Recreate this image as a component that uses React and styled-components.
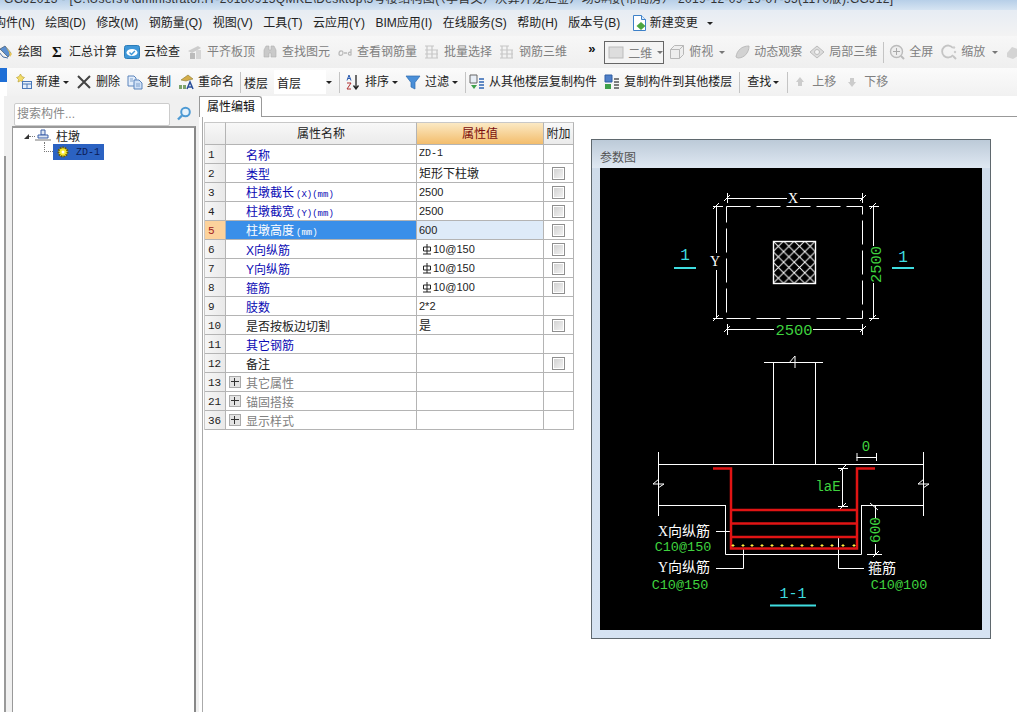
import React from "react";
import styled, { createGlobalStyle } from "styled-components";

const Global = createGlobalStyle`
  html, body { margin: 0; padding: 0; background: #fff; }
  body { font-family: "Liberation Sans", "Noto Sans CJK SC", sans-serif; font-size: 12px; color: #222; }
`;

const Page = styled.div`
  width: 1017px;
  height: 712px;
  overflow: hidden;
  display: flex;
  flex-direction: column;
`;

const TitleBar = styled.div`
  height: 10px;
  flex: none;
  overflow: hidden;
  padding-left: 4px;
  white-space: nowrap;
  background: linear-gradient(#b7cfe8, #d6e4f2);
  span {
    display: block;
    margin-top: -8px;
    line-height: 14px;
    font-size: 12px;
    letter-spacing: 0.35px;
    color: #333;
  }
`;

const MenuBar = styled.div`
  height: 26px;
  flex: none;
  display: flex;
  align-items: center;
  gap: 10.5px;
  margin-left: -6px;
  padding-left: 0;
  background: linear-gradient(#e6ecf3, #f3f3f3);
  white-space: nowrap;
`;

const MenuItem = styled.span`
  display: flex;
  align-items: center;
  gap: 3px;
  line-height: 16px;
`;

const ToolBar = styled.div`
  height: ${(p) => p.$h}px;
  flex: none;
  display: flex;
  align-items: center;
  white-space: nowrap;
  background: ${(p) => p.$bg};
`;

const Tool = styled.span`
  display: flex;
  align-items: center;
  flex: none;
  gap: ${(p) => p.$gap ?? 4}px;
  margin-right: ${(p) => p.$mr ?? 7}px;
  margin-left: ${(p) => p.$ml ?? 0}px;
  color: ${(p) => (p.$off ? "#808080" : "#222")};
  line-height: 16px;
`;

const Sep = styled.i`
  display: block;
  flex: none;
  width: 1px;
  height: 21px;
  background: #c4c4c4;
  margin-right: ${(p) => p.$mr ?? 5}px;
`;

const Caret = styled.i`
  display: block;
  flex: none;
  width: 0;
  height: 0;
  border-left: 3px solid transparent;
  border-right: 3px solid transparent;
  border-top: 3px solid ${(p) => (p.$off ? "#777" : "#222")};
  margin-left: ${(p) => p.$ml ?? -1}px;
`;

const ViewButton = styled.span`
  display: flex;
  align-items: center;
  gap: 4px;
  box-sizing: border-box;
  width: 61px;
  height: 23px;
  margin-right: 5px;
  padding-left: 3px;
  border: 1px solid #666;
  color: #808080;
  background: #f4f4f4;
`;

const LeftStub = styled.div`
  width: 13px;
  height: 100%;
  flex: none;
  margin-right: 3px;
  background: linear-gradient(#1f6fd6 0 14px, #fff 14px);
  clip-path: polygon(0 0, 7px 0, 7px 100%, 0 100%);
`;

const FloorLabel = styled.span`
  margin-right: 6px;
`;

const FloorSelect = styled.span`
  display: flex;
  align-items: center;
  justify-content: space-between;
  box-sizing: border-box;
  width: 65px;
  height: 24px;
  padding: 0 7px 0 3px;
  background: linear-gradient(90deg, #fff 80%, transparent 80%);
`;

const Body = styled.div`
  flex: 1;
  min-height: 0;
  display: flex;
`;

const Sidebar = styled.aside`
  box-sizing: border-box;
  width: 195px;
  margin-left: 4px;
  flex: none;
  display: flex;
  flex-direction: column;
  border-left: 2px solid #999;
  border-image: linear-gradient(transparent 61px, #999 61px) 1;
  padding: 0 3px 0 6px;
  background: #f0f0f0;
`;

const SearchRow = styled.div`
  height: 30px;
  flex: none;
  display: flex;
  align-items: center;
  gap: 6px;
  padding: 6px 0 0 2px;
  box-sizing: border-box;
`;

const SearchBox = styled.div`
  box-sizing: border-box;
  width: 156px;
  height: 23px;
  padding-left: 2px;
  line-height: 20px;
  color: #888;
  background: #fff;
  border: 1px solid #ccc;
  border-radius: 2px;
`;

const Tree = styled.div`
  flex: 1;
  background: #fff;
  border-top: 2px solid #999;
  border-left: 1px solid #999;
  border-right: 2px solid #888;
`;

const TreeRow = styled.div`
  display: flex;
  align-items: center;
  height: 16px;
  padding-left: ${(p) => p.$indent}px;
`;

const Expander = styled.i`
  display: block;
  width: 0;
  height: 0;
  border-left: 5px solid transparent;
  border-bottom: 5px solid #333;
`;

const Dots = styled.i`
  display: block;
  width: 6px;
  border-top: 1px dotted #777;
`;

const Elbow = styled.i`
  display: block;
  align-self: flex-start;
  box-sizing: border-box;
  width: 9px;
  height: 10px;
  margin-top: -2px;
  border-left: 1px dotted #777;
  border-bottom: 1px dotted #777;
`;

const NodeLabel = styled.span`
  margin: 2px 0 0 5px;
  line-height: 16px;
`;

const SelectedNode = styled.span`
  display: flex;
  align-items: center;
  gap: 7px;
  width: 51px;
  height: 16px;
  padding-left: 4px;
  box-sizing: border-box;
  background: #2b62c2;
  font-family: "Liberation Mono", monospace;
  font-size: 10px;
  color: #0c1c55;
`;

const Main = styled.main`
  flex: 1;
  min-width: 0;
  display: flex;
  flex-direction: column;
`;

const TabStrip = styled.div`
  height: 21px;
  flex: none;
  box-sizing: border-box;
  border-bottom: 1px solid #999;
`;

const Tab = styled.div`
  box-sizing: border-box;
  width: 63px;
  height: 21px;
  padding-left: 7px;
  line-height: 21px;
  color: #111;
  background: #fff;
  border: 1px solid #999;
  border-bottom: 0;
  border-top-right-radius: 3px;
`;

const Sheet = styled.div`
  flex: 1;
  display: flex;
  align-items: flex-start;
  margin-left: 3px;
  padding: 5px 0 0 1px;
  border-left: 1px solid #aaa;
`;

const Grid = styled.div`
  width: 370px;
  flex: none;
  border-left: 1px solid #c8c8c8;
  box-sizing: border-box;
`;

const Row = styled.div`
  display: grid;
  grid-template-columns: 21px 191px 127px 30px;
  grid-template-rows: ${(p) => p.$h ?? 19}px;
`;

const Cell = styled.div`
  box-sizing: border-box;
  display: flex;
  align-items: center;
  min-width: 0;
  white-space: nowrap;
  line-height: 14px;
  border-right: 1px solid #b4b4b4;
  border-bottom: 1px solid #b4b4b4;
`;

const HeadCell = styled(Cell)`
  justify-content: center;
  color: ${(p) => (p.$hot ? "#7a0c0c" : "#222")};
  background: ${(p) =>
    p.$hot ? "linear-gradient(#fbe9c4, #f3bd6c)" : "linear-gradient(#f8f8f8, #ebebeb)"};
  border-top: 1px solid #c8c8c8;
`;

const NumCell = styled(Cell)`
  padding: 1px 0 0 3px;
  font-family: "Liberation Mono", monospace;
  font-size: 11px;
  color: ${(p) => (p.$hot ? "#a02020" : "#222")};
  background: ${(p) => (p.$hot ? "#fcd29c" : "linear-gradient(90deg, #f6f6f6, #e9e9e9)")};
`;

const NameCell = styled(Cell)`
  padding-left: ${(p) => (p.$plus ? 3 : 20)}px;
  gap: 5px;
  color: ${(p) =>
    p.$hot ? "#fff" : p.$kind === "link" ? "#0a0ab4" : p.$kind === "group" ? "#808080" : "#222"};
  background: ${(p) => (p.$hot ? "#3a8fe9" : "#fff")};
  span {
    margin-top: 3px;
  }
  small {
    margin-left: 2px;
    font-family: "Liberation Mono", monospace;
    font-size: 9px;
  }
`;

const ValueCell = styled(Cell)`
  padding-left: 2px;
  font-size: 11px;
  background: ${(p) => (p.$hot ? "#deebf9" : "#fff")};
`;

const AddCell = styled(Cell)`
  justify-content: center;
`;

const CheckBox = styled.i`
  display: block;
  box-sizing: border-box;
  width: 13px;
  height: 13px;
  border: 1px solid #8f8f8f;
  background: linear-gradient(135deg, #cfcfcf, #f4f4f4);
  box-shadow: inset 0 0 0 1px #fff;
`;

const PlusBox = styled.i`
  position: relative;
  display: block;
  box-sizing: border-box;
  width: 12px;
  height: 12px;
  border: 1px solid #aaa;
  background: #e4e4e4;
  &::before, &::after {
    content: "";
    position: absolute;
    background: #333;
  }
  &::before { left: 1px; right: 1px; top: 4px; height: 1px; }
  &::after { top: 1px; bottom: 1px; left: 4px; width: 1px; }
`;

const Steel = styled.span`
  display: flex;
  align-items: center;
  gap: 1px;
  padding-left: 3px;
`;

const ParamPanel = styled.section`
  box-sizing: border-box;
  width: 400px;
  height: 500px;
  flex: none;
  margin: 17px 0 0 17px;
  padding: 0 8px 8px;
  border: 1px solid #5f686e;
  background: linear-gradient(#bccad8 0, #dfe8f2 28px, #cfdcea 28px, #d6e3f2 100%);
`;

const ParamTitle = styled.div`
  height: 28px;
  line-height: 36px;
  color: #555;
`;

const Drawing = styled.svg`
  display: block;
  width: 382px;
  height: 462px;
  background: #000;
`;

const CadText = styled.text`
  font-family: ${(p) =>
    p.$serif ? '"Liberation Serif", "Noto Sans CJK SC", serif' : '"Liberation Mono", monospace'};
  font-size: ${(p) => p.$size ?? 14}px;
  fill: ${(p) => p.$color ?? "#fff"};
  stroke: none;
  text-anchor: middle;
  dominant-baseline: central;
`;

const Ico = ({ w = 16, children }) => (
  <svg width={w} height="16" viewBox={`0 0 ${w} 16`} style={{ flex: "none", display: "block" }}>
    {children}
  </svg>
);

const icons = {
  draw: (
    <>
      <path d="M2 5l5-3 6 7-3 4z" fill="#5b8fd0" stroke="#345" strokeWidth=".6" />
      <path d="M8 3l6 7-2 3-1-5z" fill="#e8c65a" />
      <path d="M1 8l4 5 5 1" fill="none" stroke="#4a6fa5" />
    </>
  ),
  cloud: (
    <>
      <rect x=".5" y="1.5" width="15" height="13" rx="2" fill="#3e97d8" stroke="#2b7cb8" />
      <ellipse cx="8" cy="8.5" rx="5.5" ry="3.6" fill="#fff" />
      <path d="M5.5 8.5l2 2 3.4-3.6" fill="none" stroke="#3e97d8" strokeWidth="1.4" />
    </>
  ),
  align: (
    <>
      <path d="M1 7l10-5 3 2-9 5z" fill="#ccc" />
      <rect x="3" y="9" width="5" height="6" fill="#bbb" />
      <rect x="9" y="6" width="5" height="9" fill="#d6d6d6" />
    </>
  ),
  binoc: (
    <path d="M2 6l2-4h3v4h2V2h3l2 4v7H9V9H7v4H2z" fill="#c9c9c9" stroke="#b0b0b0" strokeWidth=".6" />
  ),
  squiggle: (
    <path d="M2 10c0-4 4-4 4-1s-4 3-4 1zM7 9h3M14 5v6c-3 1-4-3 0-3" fill="none" stroke="#bbb" strokeWidth="1.3" />
  ),
  batch: (
    <path d="M1 2h9M1 6h13M1 10h13M1 14h13M3 2v12M8 2v12M13 6v8" fill="none" stroke="#c6c6c6" strokeWidth="1.2" />
  ),
  flat: <rect x="1" y="3" width="14" height="11" fill="#ddd" stroke="#bbb" />,
  cube: (
    <path d="M1.5 5.5l4-4h9v9l-4 4h-9zM1.5 5.5h9v9M10.5 5.5l4-4" fill="#eee" stroke="#b8b8b8" />
  ),
  orbit: <path d="M2 13C3 6 8 2 15 2c0 7-5 12-11 12z" fill="#d2d2d2" stroke="#bbb" />,
  local: (
    <>
      <path d="M8 2l7 6-7 6-7-6z" fill="#ddd" stroke="#bbb" />
      <circle cx="8" cy="8" r="2.5" fill="#f4f4f4" stroke="#bbb" />
    </>
  ),
  full: (
    <>
      <circle cx="7.5" cy="7.5" r="6" fill="#eee" stroke="#bbb" strokeWidth="1.4" />
      <path d="M7.5 4v7M4 7.5h7" stroke="#aaa" />
      <path d="M12 12l3 3" stroke="#bbb" strokeWidth="2" />
    </>
  ),
  zoom: (
    <>
      <path d="M12 4a6 6 0 1 0 0 7" fill="none" stroke="#c4c4c4" strokeWidth="1.8" />
      <path d="M12 12l3 3" stroke="#c4c4c4" strokeWidth="2" />
      <circle cx="13" cy="3.5" r="1.2" fill="#ccc" />
      <circle cx="14" cy="8" r="1.2" fill="#ccc" />
    </>
  ),
  blob: <path d="M2 9l5-6 6 2v7l-5 3-6-2z" fill="#d4d4d4" />,
  create: (
    <>
      <path d="M4.5 0l1.4 2.6L8.500 3.500 6.500 5.500 7 8 4.500 6.800 2 8l.5-2.500L.5 3.500 3 2.600z" fill="#f2dc6a" stroke="#b69a2a" strokeWidth=".6" />
      <rect x="6.500" y="7.500" width="9" height="7" fill="#e4eefb" stroke="#4a78b8" />
      <path d="M6.500 10h9M11 10v4.500" stroke="#4a78b8" />
    </>
  ),
  remove: <path d="M2 2l12 12M14 2L2 14" stroke="#444" strokeWidth="2" />,
  copy: (
    <>
      <path d="M1 2h6l2 2v8H1z" fill="#e4eefb" stroke="#5a84bc" />
      <path d="M7 6h5l3 3v6H7z" fill="#cfe0f6" stroke="#5a84bc" />
      <path d="M3 5h3M3 7h3M9 10h4M9 12h4" stroke="#5a84bc" strokeWidth=".7" />
    </>
  ),
  rename: (
    <>
      <path d="M3 6l7-5 5 4-4 1-3 1z" fill="#d4ad4a" stroke="#8a7a30" strokeWidth=".6" />
      <path d="M1 15v-4h3v4zM5 15v-4h3v4z" fill="#7ca26a" />
      <path d="M9 15l3-7 3 7M10 13h4" fill="none" stroke="#2a4f9a" strokeWidth="1.5" />
    </>
  ),
  sort: (
    <>
      <path d="M2 6.500L4 1l2 5.500M2.800 4.500h2.400" fill="none" stroke="#2a5bb0" />
      <path d="M2 9h4l-4 6h4" fill="none" stroke="#b03030" />
      <path d="M11 1v13M8.500 11.500L11 15l2.500-3.500" fill="none" stroke="#222" strokeWidth="1.3" />
    </>
  ),
  filter: <path d="M1 2h14L10 8.500V15l-4-2V8.500z" fill="#4a8fd8" stroke="#2e6cb0" strokeWidth=".7" />,
  fromFloor: (
    <>
      <path d="M1 1h7v8H1z" fill="#e8eef6" stroke="#666" />
      <path d="M2 11h6l-3 4z" fill="#3ea04a" />
      <path d="M10 5h5M10 8h5M10 11h5M10 14h5" stroke="#2f66b4" strokeWidth="1.600" />
    </>
  ),
  toFloor: (
    <>
      <path d="M1 1h7v7H1z" fill="#4f7fc8" stroke="#2f5ea4" />
      <path d="M1 10h6v5H1z" fill="#3ea04a" />
      <path d="M10 5h5M10 8h5M10 11h5M10 14h5" stroke="#555" strokeWidth="1.600" />
    </>
  ),
  up: <path d="M8 3l4 5h-2v4H6V8H4z" fill="#ccc" />,
  down: <path d="M8 13l4-5h-2V4H6v4H4z" fill="#ccc" />,
  change: (
    <>
      <path d="M2.500 .500h8l4 4v11h-12z" fill="#fff" stroke="#3d80c8" />
      <path d="M10.500 .500v4h4" fill="#dceafa" stroke="#3d80c8" />
      <path d="M10 7l4.500 4L10 15l-4.500-4z" fill="#4ea63e" />
    </>
  ),
  search: (
    <>
      <circle cx="9.500" cy="6" r="4.300" fill="#e6f2fb" stroke="#4d9ad4" strokeWidth="2" />
      <path d="M6 9.500l-4 4" stroke="#4d9ad4" strokeWidth="2.400" />
    </>
  ),
  pier: (
    <>
      <path d="M6 2h4v5H6z" fill="#dde6f3" stroke="#3a5fa8" />
      <path d="M3 7h10v3H3z" fill="#dde6f3" stroke="#3a5fa8" />
      <path d="M0 11h16v2H0z" fill="#bbb" />
    </>
  ),
  gear: (
    <>
      <circle cx="6" cy="8" r="4.500" fill="#f6ea2e" stroke="#6a5a00" strokeDasharray="1.500 1" strokeWidth="2" />
      <circle cx="6" cy="8" r="1.500" fill="#fff" />
    </>
  ),
};

const Icon = ({ name, w }) => <Ico w={w}>{icons[name]}</Ico>;

const SigmaGlyph = styled.b`
  display: block;
  width: 10px;
  font-family: "Liberation Serif", serif;
  font-size: 15px;
  color: #111;
`;

const Chevrons = styled.b`
  display: block;
  width: 8px;
  margin-top: -7px;
  font-size: 13px;
  color: #111;
`;

const MainTools = () => (
  <ToolBar $h={32} $bg="linear-gradient(#f7f7f7, #efefef)">
    <Tool $ml={-2} $mr={10}><Icon name="draw" />绘图</Tool>
    <Tool $mr={7} $gap={7}>
      <SigmaGlyph>Σ</SigmaGlyph>汇总计算
    </Tool>
    <Tool><Icon name="cloud" />云检查</Tool>
    <Tool $off $mr={7}><Icon name="align" />平齐板顶</Tool>
    <Tool $off><Icon name="binoc" />查找图元</Tool>
    <Tool $off><Icon name="squiggle" />查看钢筋量</Tool>
    <Tool $off><Icon name="batch" />批量选择</Tool>
    <Tool $off $mr={21}><Icon name="batch" />钢筋三维</Tool>
    <Tool $mr={8}><Chevrons>»</Chevrons></Tool>
    <ViewButton><Icon name="flat" />二维<Caret $off $ml={1} /></ViewButton>
    <Tool $off $mr={9}><Icon name="cube" />俯视<Caret $off $ml={2} /></Tool>
    <Tool $off><Icon name="orbit" />动态观察</Tool>
    <Tool $off $mr={6}><Icon name="local" />局部三维</Tool>
    <Sep />
    <Tool $off $mr={8}><Icon name="full" />全屏</Tool>
    <Tool $off><Icon name="zoom" />缩放<Caret $off $ml={3} /></Tool>
    <Tool $off><Icon name="blob" /></Tool>
  </ToolBar>
);

const ElementTools = () => (
  <ToolBar $h={28} $bg="linear-gradient(#fbfbfb, #f1f1f1)">
    <LeftStub />
    <Tool $mr={8}><Icon name="create" />新建<Caret /></Tool>
    <Tool $ml={-1} $mr={7}><Icon name="remove" />删除</Tool>
    <Tool><Icon name="copy" />复制</Tool>
    <Tool $mr={6}><Icon name="rename" />重命名</Tool>
    <Sep $mr={3} />
    <FloorLabel>楼层</FloorLabel>
    <FloorSelect>首层<Caret $ml={0} /></FloorSelect>
    <Sep />
    <Tool><Icon name="sort" />排序<Caret /></Tool>
    <Tool><Icon name="filter" />过滤<Caret /></Tool>
    <Sep $mr={3} />
    <Tool><Icon name="fromFloor" />从其他楼层复制构件</Tool>
    <Tool><Icon name="toFloor" />复制构件到其他楼层</Tool>
    <Sep $mr={7} />
    <Tool $mr={8} $gap={3}>查找<Caret /></Tool>
    <Sep $mr={4} />
    <Tool $off $mr={8}><Icon name="up" />上移</Tool>
    <Tool $off><Icon name="down" />下移</Tool>
  </ToolBar>
);

const rows = [
  { n: 1, name: "名称", kind: "link", value: "ZD-1", mono: true },
  { n: 2, name: "类型", kind: "link", value: "矩形下柱墩", check: true, big: true },
  { n: 3, name: "柱墩截长", unit: "(X)(mm)", kind: "link", value: "2500", check: true },
  { n: 4, name: "柱墩截宽", unit: "(Y)(mm)", kind: "link", value: "2500", check: true },
  { n: 5, name: "柱墩高度", unit: "(mm)", kind: "link", value: "600", check: true, hot: true },
  { n: 6, name: "X向纵筋", kind: "link", steel: "10@150", check: true },
  { n: 7, name: "Y向纵筋", kind: "link", steel: "10@150", check: true },
  { n: 8, name: "箍筋", kind: "link", steel: "10@100", check: true },
  { n: 9, name: "肢数", kind: "link", value: "2*2" },
  { n: 10, name: "是否按板边切割", value: "是", check: true, big: true },
  { n: 11, name: "其它钢筋", kind: "link" },
  { n: 12, name: "备注", check: true },
  { n: 13, name: "其它属性", kind: "group", plus: true },
  { n: 21, name: "锚固搭接", kind: "group", plus: true },
  { n: 36, name: "显示样式", kind: "group", plus: true },
];

const BigValue = styled.span`
  margin-top: 2px;
  font-size: 12px;
`;

const MonoValue = styled.span`
  font-family: "Liberation Mono", monospace;
  font-size: 10px;
`;

const SteelMark = () => (
  <svg width="10" height="11" viewBox="0 0 10 11" style={{ display: "block" }}>
    <path d="M1.500 3h7v4h-7zM5 0v10M1 10h8" fill="none" stroke="#222" />
  </svg>
);

const PropertyGrid = () => (
  <Grid>
    <Row $h={23}>
      <HeadCell />
      <HeadCell>属性名称</HeadCell>
      <HeadCell $hot>属性值</HeadCell>
      <HeadCell>附加</HeadCell>
    </Row>
    {rows.map((r) => (
      <Row key={r.n}>
        <NumCell $hot={r.hot}>{r.n}</NumCell>
        <NameCell $kind={r.kind} $hot={r.hot} $plus={r.plus}>
          {r.plus && <PlusBox />}
          <span>
            {r.name}
            {r.unit && <small>{r.unit}</small>}
          </span>
        </NameCell>
        <ValueCell $hot={r.hot}>
          {r.steel ? (
            <Steel><SteelMark />{r.steel}</Steel>
          ) : r.big ? (
            <BigValue>{r.value}</BigValue>
          ) : r.mono ? (
            <MonoValue>{r.value}</MonoValue>
          ) : (
            r.value
          )}
        </ValueCell>
        <AddCell>{r.check && <CheckBox />}</AddCell>
      </Row>
    ))}
  </Grid>
);

const GREEN = "#3fd23f";
const CYAN = "#3fdde0";
const RED = "#e01414";

// short slash on the end of a dimension line
const Tick = ({ x, y }) => <path d={`M${x - 3} ${y + 3}L${x + 3} ${y - 3}`} />;

const BreakH = ({ x, y }) => <path d={`M${x - 4} ${y + 1}L${x + 2} ${y - 6}V${y + 6}`} fill="none" />;
const BreakV = ({ x, y }) => <path d={`M${x + 1} ${y - 5}L${x - 5} ${y}H${x + 6}L${x} ${y + 4}`} fill="none" />;

const dots = [733, 743, 752, 762, 772, 782, 792, 802, 812, 822, 832, 843, 854];

const ParamDrawing = () => (
  <Drawing viewBox="600 168 382 462">
    <defs>
      <pattern id="hatch" width="10.6" height="10.6" patternUnits="userSpaceOnUse" x="773" y="241">
        <path d="M0 0L10.600 10.600M10.600 0L0 10.600" stroke="#fff" strokeWidth="1" />
      </pattern>
    </defs>

    {/* plan */}
    <g stroke="#fff" strokeWidth="1" fill="none">
      <rect x="726.5" y="206.5" width="136" height="112" strokeDasharray="24 6" />
      <rect x="773.5" y="241.500" width="42" height="42" fill="url(#hatch)" strokeWidth="1.400" />
      <path d="M727.500 198.500H787M800 198.500H863M727.500 193V203M862.500 193V203" />
      <Tick x={727} y={198} />
      <Tick x={863} y={198} />
      <path d="M716.500 206V253M716.500 270V318M713 206.500H723M713 318.500H723" />
      <Tick x={716} y={206} />
      <Tick x={716} y={318} />
      <path d="M873.500 206V246M873.500 283V318M869 206.500H879M869 318.500H879" />
      <Tick x={873} y={206} />
      <Tick x={873} y={318} />
      <path d="M727.500 329.500H774M813 329.500H863M727.500 324V335M862.500 324V335" />
      <Tick x={727} y={329} />
      <Tick x={863} y={329} />
    </g>
    <CadText x={793} y={198} $size={14} $serif>X</CadText>
    <CadText x={715} y={261} $size={14} $serif>Y</CadText>
    <CadText x={794} y={331} $size={15.5} $color={GREEN}>2500</CadText>
    <CadText x={0} y={0} $size={15.5} $color={GREEN} transform="translate(877 264.5) rotate(-90)">2500</CadText>
    <CadText x={685} y={256} $size={16} $color={CYAN}>1</CadText>
    <CadText x={903} y={258} $size={16} $color={CYAN}>1</CadText>
    <g stroke={CYAN} strokeWidth="2">
      <path d="M674 268H696M892 268H914M770 605.500H816" />
    </g>

    {/* section */}
    <g stroke="#fff" strokeWidth="1" fill="none">
      <path d="M764 362.500H823M773.500 362.500V464M815.500 362.500V464" />
      <BreakH x={793} y={362} />
      <path d="M658.500 452V516M923.500 452V516M658.500 464.500H923.500" />
      <path d="M658.500 505.500H726M862 505.500H923.500" />
      <BreakV x={658} y={484} />
      <BreakV x={923} y={484} />
      <path d="M725.500 505V554.500H861.500V505" />
      <path d="M856.500 457.500H877M857 453V461M876.500 453V461" />
      <path d="M842.500 468V506M838 468.500H848M838 506.500H848" />
      <Tick x={843} y={468} />
      <Tick x={843} y={506} />
      <path d="M875.500 505V518M875.500 544V554M867 554.500H882M870 503L878 510" />
      <Tick x={876} y={554} />
      <path d="M716 531.500H731M716 568.500H743.500V548M864 568.500H838.500V537" />
    </g>
    <g stroke={RED} strokeWidth="2.500" fill="none">
      <path d="M713 468.500H731V548.500H857V468.500H875" />
      <path d="M731 510H857M731 523.500H857M731 537H857" />
    </g>
    <g stroke="#ffef40" strokeWidth="1" fill="none">
      {dots.map((x) => (
        <path key={x} d={`M${x - 1.5} 545.500h3M${x} 544v3`} />
      ))}
    </g>
    <CadText x={866} y={447} $size={14} $color={GREEN}>0</CadText>
    <CadText x={828} y={487} $size={14} $color={GREEN}>laE</CadText>
    <CadText x={0} y={0} $size={14.5} $color={GREEN} transform="translate(876 530) rotate(-90)">600</CadText>
    <CadText x={684} y={531} $size={14} $serif>X向纵筋</CadText>
    <CadText x={683} y={547} $size={13.5} $color={GREEN}>C10@150</CadText>
    <CadText x={684} y={567} $size={14} $serif>Y向纵筋</CadText>
    <CadText x={680} y={585} $size={13.5} $color={GREEN}>C10@150</CadText>
    <CadText x={882} y={568} $size={14} $serif>箍筋</CadText>
    <CadText x={899} y={585} $size={13.5} $color={GREEN}>C10@100</CadText>
    <CadText x={793} y={594} $size={15} $color={CYAN}>1-1</CadText>
  </Drawing>
);

export default function App() {
  return (
    <Page>
      <Global />
      <TitleBar>
        <span>GGJ2013 - [C:\Users\Administrator.IT-20180915QMKE\Desktop\5号楼结构图(（李首文）决算开龙汇金）场5#楼(布阁房） 2019-12-09-19-07-55(1170版).GGJ12]</span>
      </TitleBar>
      <MenuBar>
        {["构件(N)", "绘图(D)", "修改(M)", "钢筋量(Q)", "视图(V)", "工具(T)", "云应用(Y)", "BIM应用(I)", "在线服务(S)", "帮助(H)", "版本号(B)"].map((m) => (
          <MenuItem key={m}>{m}</MenuItem>
        ))}
        <MenuItem><Icon name="change" />新建变更<Caret $ml={6} /></MenuItem>
      </MenuBar>
      <MainTools />
      <ElementTools />
      <Body>
        <Sidebar>
          <SearchRow>
            <SearchBox>搜索构件...</SearchBox>
            <Icon name="search" />
          </SearchRow>
          <Tree>
            <TreeRow $indent={11}>
              <Expander />
              <Dots />
              <Icon name="pier" />
              <NodeLabel>柱墩</NodeLabel>
            </TreeRow>
            <TreeRow $indent={31}>
              <Elbow />
              <SelectedNode><Icon name="gear" w={12} />ZD-1</SelectedNode>
            </TreeRow>
          </Tree>
        </Sidebar>
        <Main>
          <TabStrip><Tab>属性编辑</Tab></TabStrip>
          <Sheet>
            <PropertyGrid />
            <ParamPanel>
              <ParamTitle>参数图</ParamTitle>
              <ParamDrawing />
            </ParamPanel>
          </Sheet>
        </Main>
      </Body>
    </Page>
  );
}
